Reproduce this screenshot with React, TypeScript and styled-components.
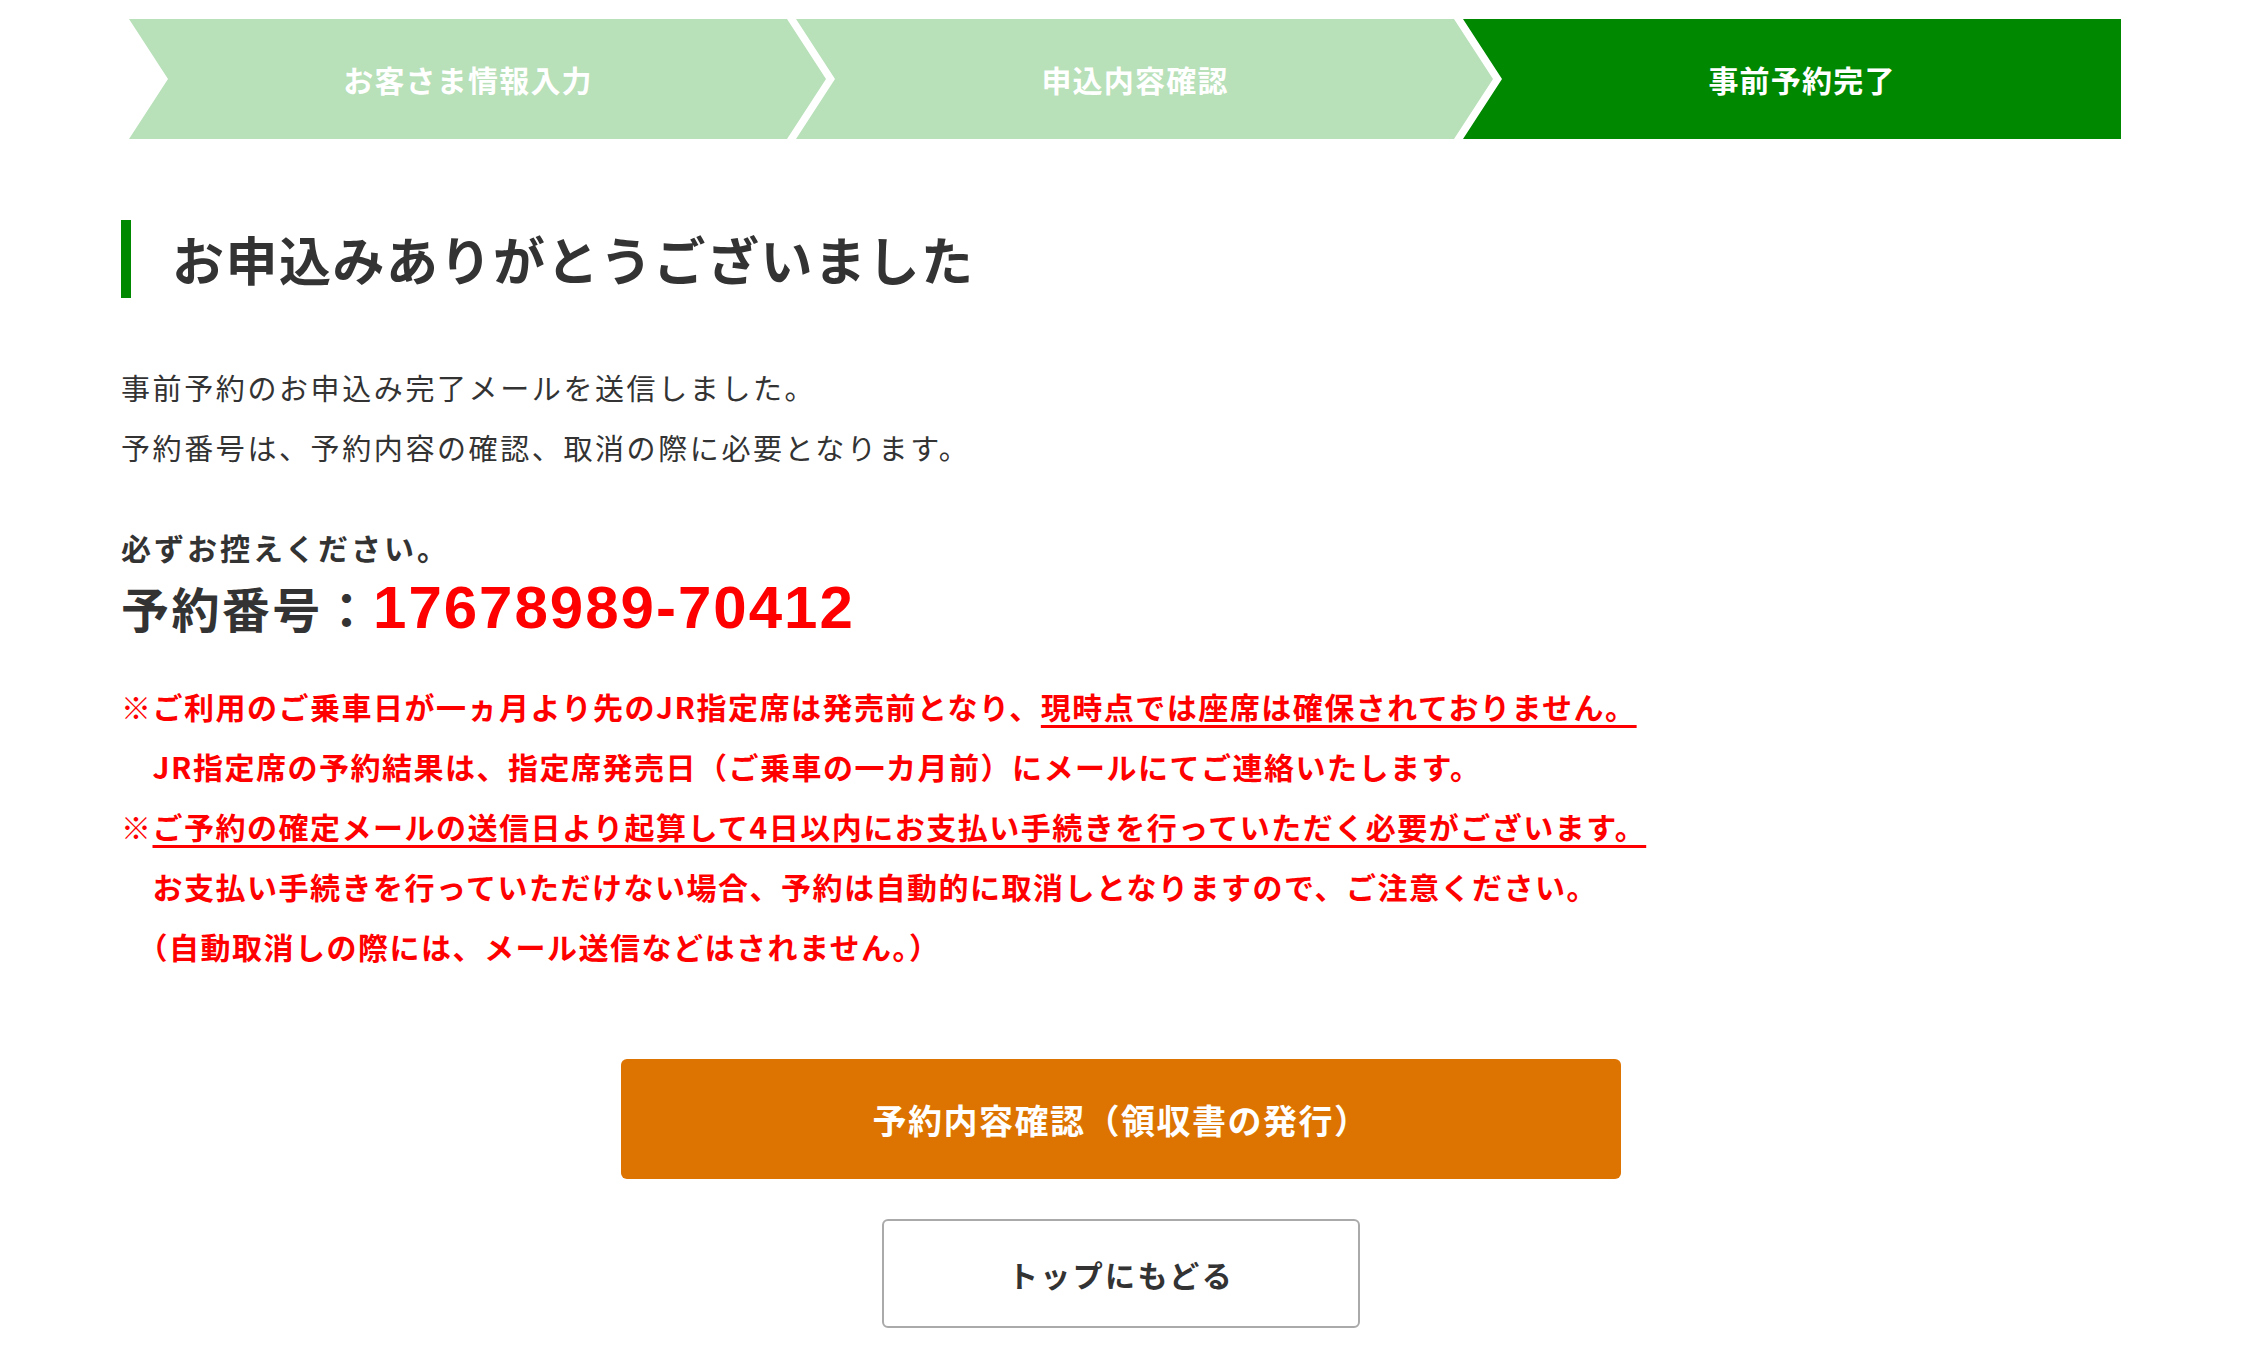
import styled, { createGlobalStyle } from 'styled-components';

const GlobalStyle = createGlobalStyle`
  html, body {
    margin: 0;
    padding: 0;
    background: #fff;
  }
  body {
    font-family: "Noto Sans CJK JP", sans-serif;
    color: #333;
  }
`;

const steps = [
  { label: 'お客さま情報入力', active: false },
  { label: '申込内容確認', active: false },
  { label: '事前予約完了', active: true },
];

function App() {
  return (
    <>
      <GlobalStyle />
      <StyledRoot>
        <StyledStepper>
          {steps.map((step, i) => (
            <StyledStep key={step.label} $active={step.active} $last={i === steps.length - 1}>
              {step.label}
            </StyledStep>
          ))}
        </StyledStepper>

        <StyledTitle>お申込みありがとうございました</StyledTitle>

        <StyledLead>
          <p>事前予約のお申込み完了メールを送信しました。</p>
          <p>予約番号は、予約内容の確認、取消の際に必要となります。</p>
        </StyledLead>

        <StyledReserve>
          <p>必ずお控えください。</p>
          <h2>
            予約番号：<span>17678989-70412</span>
          </h2>
        </StyledReserve>

        <StyledNotes>
          <li>
            ※ご利用のご乗車日が一ヵ月より先のJR指定席は発売前となり、
            <u>現時点では座席は確保されておりません。</u>
            <br />
            JR指定席の予約結果は、指定席発売日（ご乗車の一カ月前）にメールにてご連絡いたします。
          </li>
          <li>
            ※<u>ご予約の確定メールの送信日より起算して4日以内にお支払い手続きを行っていただく必要がございます。</u>
            <br />
            お支払い手続きを行っていただけない場合、予約は自動的に取消しとなりますので、ご注意ください。
            <br />
            <StyledHalt>（</StyledHalt>自動取消しの際には、メール送信などはされません<StyledHalt>。</StyledHalt>）
          </li>
        </StyledNotes>

        <StyledActions>
          <StyledPrimaryButton type="button">予約内容確認（領収書の発行）</StyledPrimaryButton>
          <StyledSecondaryButton type="button">トップにもどる</StyledSecondaryButton>
        </StyledActions>
      </StyledRoot>
    </>
  );
}

const StyledRoot = styled.main`
  width: 2000px;
  margin: 0 auto;
  padding: 19px 0 40px;
`;

const StyledStepper = styled.ul`
  display: flex;
  margin: 0;
  padding: 0 0 0 8px;
  list-style: none;
`;

const StyledStep = styled.li<{ $active: boolean; $last: boolean }>`
  flex: 1 1 0;
  height: 120px;
  display: flex;
  align-items: center;
  justify-content: center;
  padding-left: 20px;
  padding-right: ${({ $last }) => ($last ? '0' : '39px')};
  margin-right: ${({ $last }) => ($last ? '0' : '-30px')};
  background-color: ${({ $active }) => ($active ? '#008800' : '#b8e0b9')};
  color: #fff;
  font-size: 30px;
  font-weight: 700;
  letter-spacing: 0.04em;
  clip-path: ${({ $last }) =>
    $last
      ? 'polygon(0 0, 100% 0, 100% 100%, 0 100%, 39px 50%)'
      : 'polygon(0 0, calc(100% - 39px) 0, 100% 50%, calc(100% - 39px) 100%, 0 100%, 39px 50%)'};
`;

const StyledTitle = styled.h1`
  margin: 81px 0 0;
  height: 78px;
  display: flex;
  align-items: center;
  border-left: 10px solid #008800;
  padding-left: 41px;
  font-size: 52px;
  font-weight: 700;
  letter-spacing: 1.5px;
  line-height: 1;
  color: #333;
`;

const StyledLead = styled.div`
  margin-top: 59px;

  & > p {
    margin: 0;
    font-size: 29px;
    line-height: 60px;
    letter-spacing: 2.6px;
    color: #333;
  }
`;

const StyledReserve = styled.div`
  margin-top: 50px;
  color: #333;

  & > p {
    margin: 0;
    font-size: 30px;
    font-weight: 700;
    line-height: 40px;
    letter-spacing: 0.1em;
  }

  & > h2 {
    margin: 0;
    font-size: 48px;
    font-weight: 700;
    line-height: 80px;
    letter-spacing: 0.05em;

    & > span {
      font-family: "Liberation Sans", "Noto Sans CJK JP", sans-serif;
      font-size: 60px;
      letter-spacing: 2px;
      color: #ff0000;
    }
  }
`;

const StyledNotes = styled.ul`
  margin: 28px 0 0;
  padding: 0;
  list-style: none;

  & > li {
    padding-left: 1.05em;
    text-indent: -1.05em;
    font-size: 30px;
    font-weight: 700;
    line-height: 60px;
    letter-spacing: 0.05em;
    color: #ff0000;
  }

  & u {
    text-decoration-thickness: 3px;
    text-underline-offset: 6px;
  }
`;

const StyledHalt = styled.span`
  font-feature-settings: "halt";
`;

const StyledActions = styled.div`
  margin-top: 83px;
  display: flex;
  flex-direction: column;
  align-items: center;
  gap: 40px;
`;

const StyledPrimaryButton = styled.button`
  width: 1000px;
  height: 120px;
  border: 0;
  border-radius: 6px;
  background-color: #dd7300;
  color: #fff;
  font-family: inherit;
  font-size: 34px;
  font-weight: 700;
  letter-spacing: 1.5px;
  cursor: pointer;
`;

const StyledSecondaryButton = styled.button`
  width: 478px;
  height: 109px;
  border: 2px solid #aaa;
  border-radius: 6px;
  background-color: #fff;
  color: #333;
  font-family: inherit;
  font-size: 30px;
  font-weight: 700;
  letter-spacing: 0.08em;
  cursor: pointer;
`;

export default App;
